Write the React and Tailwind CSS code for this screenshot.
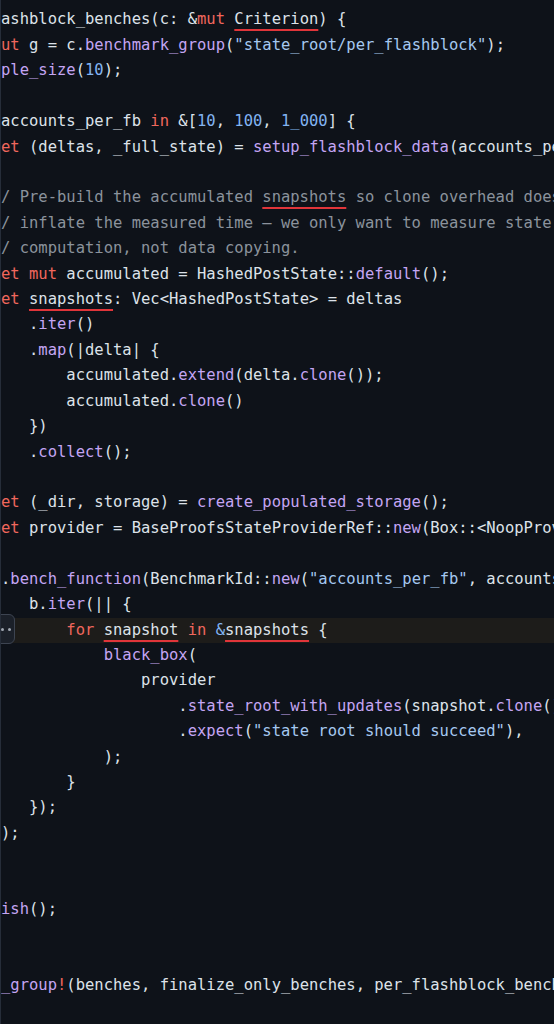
const T = "text-[#dde2e9]";
const K = "text-[#f0675d]";
const F = "text-[#c4a5f3]";
const S = "text-[#a5c8f0]";
const N = "text-[#82b4f2]";
const C = "text-[#8b929c]";
const U = "underline decoration-[#e0353a] decoration-2 underline-offset-[5px]";

// each line: list of [text, classes]
const lines = [
  [["ashblock_benches(c: &", T], ["mut", K], [" ", T], ["Criterion", `${T} ${U}`], [") {", T]],
  [["ut", K], [" g = c.", T], ["benchmark_group", F], ["(", T], ['"state_root/per_flashblock"', S], [");", T]],
  [["ple_size", F], ["(", T], ["10", N], [");", T]],
  [],
  [["accounts_per_fb ", T], ["in", K], [" &[", T], ["10", N], [", ", T], ["100", N], [", ", T], ["1_000", N], ["] {", T]],
  [["et", K], [" (deltas, _full_state) = ", T], ["setup_flashblock_data", F], ["(accounts_per_fb);", T]],
  [],
  [["/ Pre-build the accumulated ", C], ["snapshots", `${C} ${U}`], [" so clone overhead doesn't", C]],
  [["/ inflate the measured time — we only want to measure state root", C]],
  [["/ computation, not data copying.", C]],
  [["et", K], [" ", T], ["mut", K], [" accumulated = HashedPostState::", T], ["default", F], ["();", T]],
  [["et", K], [" ", T], ["snapshots", `${T} ${U}`], [": Vec<HashedPostState> = deltas", T]],
  [["   .", T], ["iter", F], ["()", T]],
  [["   .", T], ["map", F], ["(|delta| {", T]],
  [["       accumulated.", T], ["extend", F], ["(delta.", T], ["clone", F], ["());", T]],
  [["       accumulated.", T], ["clone", F], ["()", T]],
  [["   })", T]],
  [["   .", T], ["collect", F], ["();", T]],
  [],
  [["et", K], [" (_dir, storage) = ", T], ["create_populated_storage", F], ["();", T]],
  [["et", K], [" provider = BaseProofsStateProviderRef::", T], ["new", F], ["(Box::<NoopProvider>::", T], ["default", F], ["());", T]],
  [],
  [[".", T], ["bench_function", F], ["(BenchmarkId::", T], ["new", F], ["(", T], ['"accounts_per_fb"', S], [", accounts_per_fb), |b| {", T]],
  [["   b.", T], ["iter", F], ["(|| {", T]],
  [["       ", T], ["for", K], [" ", T], ["snapshot", `${T} ${U}`], [" ", T], ["in", K], [" ", T], ["&", N], ["snapshots", `${T} ${U}`], [" {", T]],
  [["           ", T], ["black_box", F], ["(", T]],
  [["               provider", T]],
  [["                   .", T], ["state_root_with_updates", F], ["(snapshot.", T], ["clone", F], ["())", T]],
  [["                   .", T], ["expect", F], ["(", T], ['"state root should succeed"', S], ["),", T]],
  [["           );", T]],
  [["       }", T]],
  [["   });", T]],
  [[");", T]],
  [],
  [],
  [["ish", F], ["();", T]],
  [],
  [],
  [["_group", F], ["!", K], ["(benches, finalize_only_benches, per_flashblock_benches);", T]],
  [],
];

const CodeLine = ({ tokens, active }) => (
  <div className={`h-[25.43px] leading-[25.43px] whitespace-pre ${active ? "bg-[#1d1c1a]" : ""}`}>
    {tokens.map(([text, cls], i) => (
      <span key={i} className={cls}>
        {text}
      </span>
    ))}
  </div>
);

export default function App() {
  return (
    <div className="relative w-[554px] h-[1024px] overflow-hidden bg-[#0e1219] border-l-[1.5px] border-[#262d39] pt-[7.4px] font-['DejaVu_Sans_Mono',monospace] text-[15.5px]">
      {lines.map((tokens, i) => (
        <CodeLine key={i} tokens={tokens} active={i === 24} />
      ))}
      {/* folded region marker */}
      <div className="absolute left-[-9px] top-[614px] w-[23px] h-[30px] rounded-md border border-[#3d4451] bg-[#1b2029] flex items-center justify-end gap-[4px] pr-[3px]">
        <span className="w-[3px] h-[3px] rounded-full bg-[#a0a7b1]" />
        <span className="w-[3px] h-[3px] rounded-full bg-[#a0a7b1]" />
      </div>
    </div>
  );
}
